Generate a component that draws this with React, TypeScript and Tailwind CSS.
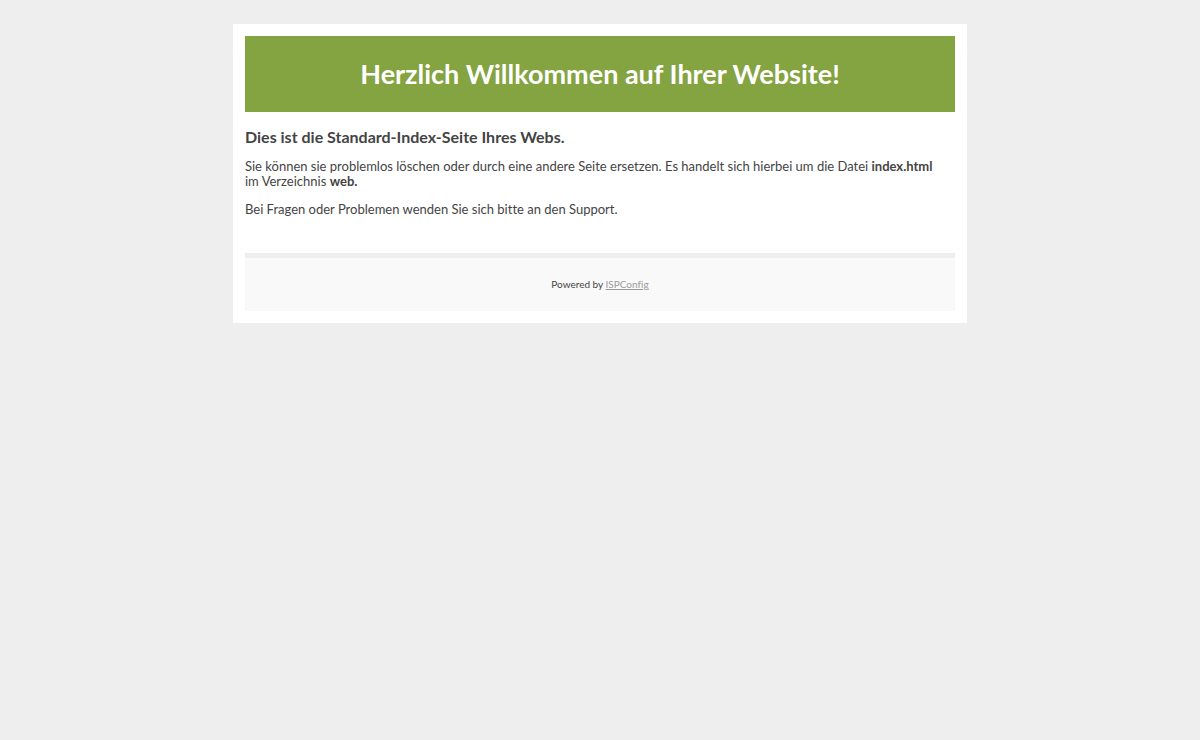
function Header() {
    return (
        <header className="bg-[#84a341] text-center py-5">
            <h1 className="text-[27px] leading-9 font-bold text-white">Herzlich Willkommen auf Ihrer Website!</h1>
        </header>
    )
}

function Footer() {
    return (
        <footer className="mt-9 border-t-5 border-[#eeeeee] bg-[#f9f9f9] py-5 text-center">
            <p className="text-[10px] leading-[13px]">
                Powered by <a href="https://www.ispconfig.org" className="text-[#999999] underline">ISPConfig</a>
            </p>
        </footer>
    )
}

function App() {
    return (
        <div className="min-h-screen bg-[#eeeeee] px-4 pt-6 font-['Trebuchet_MS','Lato',sans-serif] text-[13px] leading-[15px] text-[#444444] [font-variant-ligatures:none]">
            <div className="mx-auto w-full max-w-[734px] bg-white p-3">
                <Header />
                <main className="pr-2">
                    <h2 className="mt-4 text-base leading-[18px] font-bold">Dies ist die Standard-Index-Seite Ihres Webs.</h2>
                    <p className="mt-[13px]">
                        Sie können sie problemlos löschen oder durch eine andere Seite ersetzen. Es handelt sich hierbei um die Datei <b>index.html</b> im Verzeichnis <b>web.</b>
                    </p>
                    <p className="mt-[13px]">Bei Fragen oder Problemen wenden Sie sich bitte an den Support.</p>
                </main>
                <Footer />
            </div>
        </div>
    )
}

export default App
